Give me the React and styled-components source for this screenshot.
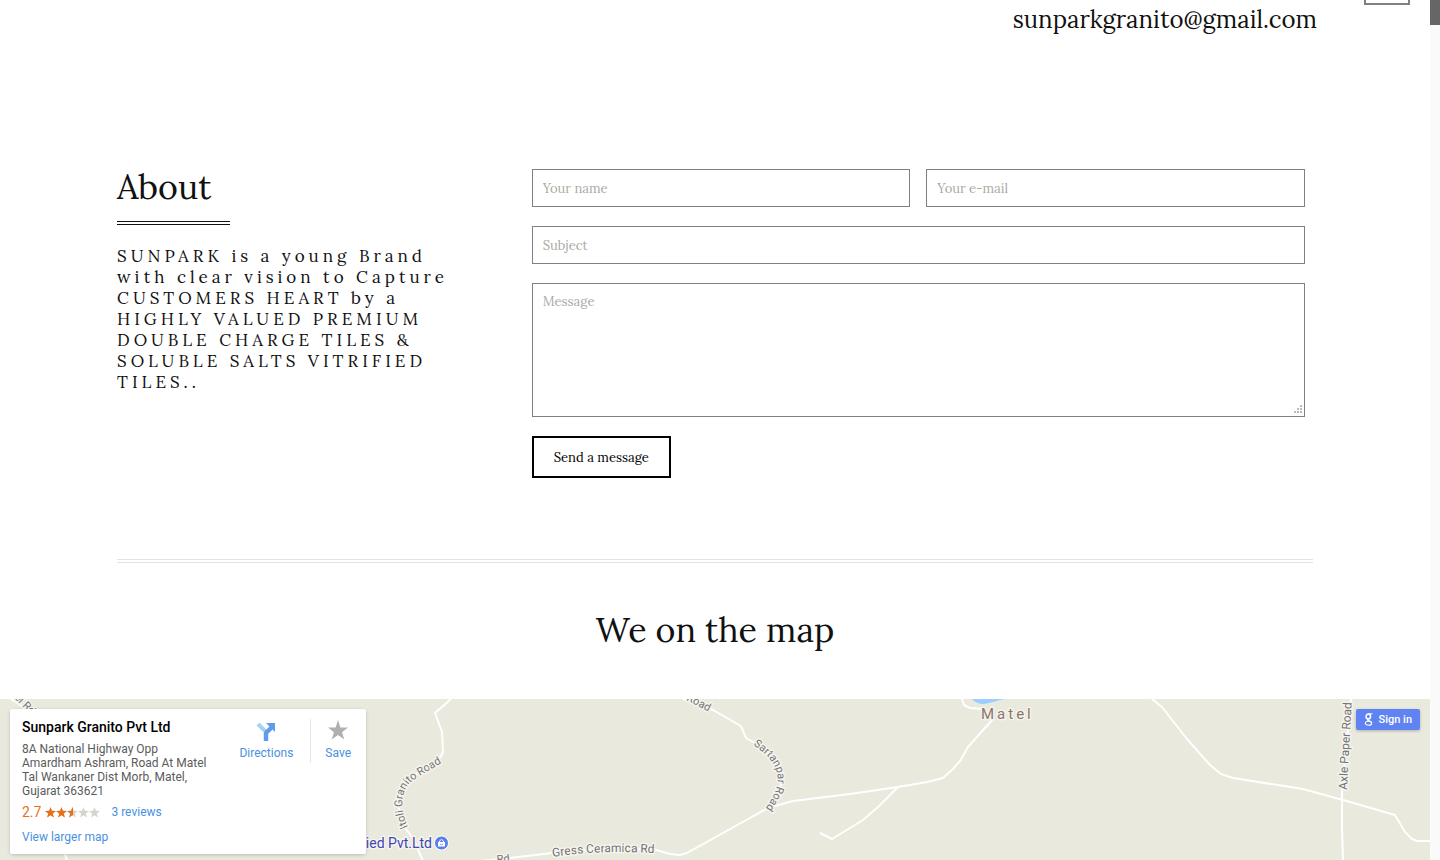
import React from "react";
import styled, { createGlobalStyle } from "styled-components";

const serif = `"Lora", "Liberation Serif", serif`;
const sans = `Roboto, "Liberation Sans", sans-serif`;

const GlobalStyle = createGlobalStyle`
  * { box-sizing: border-box; }
  body { margin: 0; background: #fff; color: #111; font-family: ${serif}; }
`;

const Frame = styled.div`
  display: flex;
  height: 100vh;
  overflow: hidden;
`;

const Page = styled.div`
  flex: 1;
  min-width: 0;
  display: flex;
  flex-direction: column;
  position: relative;
`;

const ScrollTrack = styled.div`
  width: 10px;
  background: #fafafa;
`;

const ScrollThumb = styled.div`
  height: 25px;
  background: #666;
`;

const MenuButton = styled.button`
  position: absolute;
  top: -41px;
  right: 20px;
  width: 46px;
  height: 46px;
  border: 2px solid #808080;
  background: #fff;
`;

const Header = styled.header`
  display: flex;
  justify-content: flex-end;
  padding: 4px 113px 0;
`;

const Email = styled.a`
  color: #111;
  font-size: 24px;
  line-height: 32px;
  text-decoration: none;
`;

const Contact = styled.main`
  display: grid;
  grid-template-columns: minmax(0, 1fr) minmax(0, 2fr);
  gap: 28px;
  margin: 133px 117px 0;
  padding: 0 8px 81px 0;
`;

const Heading = styled.h2`
  margin: 0;
  font-size: 34px;
  line-height: 36px;
  font-weight: 400;
`;

const AboutRule = styled.div`
  width: 113px;
  height: 4px;
  margin: 16px 0 21px;
  border: solid #111;
  border-width: 1px 0;
`;

const AboutText = styled.p`
  margin: 0;
  padding-right: 40px;
  font-size: 17px;
  line-height: 21px;
  letter-spacing: 4px;
`;

const Form = styled.form`
  display: grid;
  grid-template-columns: 1fr 1fr;
  gap: 19px 16px;
  align-content: start;
`;

const gripDots = [[11, 4], [8, 7], [11, 7], [5, 10], [8, 10], [11, 10]]
  .map(([x, y]) => `linear-gradient(#bbb, #bbb) ${x}px ${y}px / 2px 2px no-repeat`)
  .join(", ");

const Field = styled.input`
  grid-column: ${(p) => (p.$wide ? "1 / -1" : "auto")};
  width: 100%;
  min-width: 0;
  height: ${(p) => p.$height || 38}px;
  padding: ${(p) => (p.$height ? "9px 10px" : "0 10px")};
  border: 1px solid #808080;
  border-radius: 0;
  background: #fff;
  color: #111;
  font-family: ${serif};
  font-size: 13px;
  line-height: 18px;
  display: block;
  resize: vertical;
  &::placeholder { color: #aaa9a2; opacity: 1; }
  &::-webkit-resizer { background: ${gripDots}; }
`;

const Submit = styled.button`
  justify-self: start;
  height: 42px;
  padding: 0 20px;
  border: 2px solid #000;
  background: #fff;
  color: #000;
  font-family: ${serif};
  font-size: 13px;
`;

const MapIntro = styled.section`
  margin: 0 117px;
  padding: 49px 0 51px;
  border-top: 4px double #e3e3e3;
  text-align: center;
`;

const MapArea = styled.section`
  position: relative;
  flex: 1;
  min-height: 160px;
  overflow: hidden;
  background: #eae9de;
  font-family: ${sans};
`;

const MapDrawing = styled.svg`
  display: block;
  width: 100%;
  height: 100%;
  text { font-family: ${sans}; paint-order: stroke; stroke: #f5f4ee; stroke-width: 3px; stroke-linejoin: round; }
`;

const PlaceCard = styled.article`
  position: absolute;
  top: 10px;
  left: 10px;
  width: 356px;
  min-height: 145px;
  padding: 10px 14px 9px 12px;
  display: flex;
  justify-content: space-between;
  border-radius: 2px;
  background: #fff;
  box-shadow: 0 1px 4px -1px rgba(0, 0, 0, 0.3);
  font-size: 12px;
`;

const PlaceName = styled.h3`
  margin: 0 0 7px;
  color: #000;
  font-size: 14px;
  line-height: 16px;
  font-weight: 500;
`;

const Address = styled.address`
  width: 195px;
  color: #5b5b5b;
  font-style: normal;
  line-height: 14px;
`;

const Rating = styled.div`
  display: flex;
  align-items: center;
  height: 16px;
  margin: 6px 0 9px;
  color: #e7711b;
  font-size: 14px;
  svg { margin: 0 11px 0 4px; }
`;

const MapLink = styled.a`
  color: #4a90e2;
  font-size: 12px;
  line-height: 16px;
  text-decoration: none;
`;

const Actions = styled.div`
  display: flex;
  height: 44px;
`;

const Action = styled(MapLink)`
  display: flex;
  flex-direction: column;
  align-items: center;
  padding: 0 ${(p) => (p.$divided ? 17 : 1)}px 0 ${(p) => (p.$divided ? 0 : 14)}px;
  border-right: ${(p) => (p.$divided ? "1px solid #e8e8e8" : "0")};
  svg { margin-bottom: 2px; }
`;

const SignIn = styled.button`
  position: absolute;
  top: 10px;
  right: 10px;
  height: 21px;
  padding: 0 8px;
  display: flex;
  align-items: center;
  gap: 5px;
  border: 0;
  border-radius: 2px;
  background: #5f83f2;
  color: #fff;
  box-shadow: 0 1px 3px rgba(0, 0, 0, 0.25);
  font-family: ${sans};
  font-size: 11px;
  font-weight: 500;
`;

const roads = [
  "M451 0L435 14L442 33L443 52Q442 58 437 61L430 65L408 81Q397 95 398 106L405 129L413 139L419 153L423 162",
  "M65 155L67 162",
  "M0 -8L40 20",
  "M683 0L713 11L741 27L746 39L755 44L775 59Q783 72 782 83L775 99L769 104L768 109",
  "M480 162L510 159L552 154L600 150L653 150L670 155L680 156L687 154L768 109L793 102L850 95L898 88L927 83L943 79L953 70L960 62L968 48L993 20",
  "M898 88L878 108L863 121L832 140L820 134",
  "M962 0L964 6L970 9L983 10",
  "M1152 0L1162 8L1187 40L1210 66L1221 75L1233 79L1303 90L1343 101L1395 116L1405 133L1412 140L1417 142L1430 142L1600 142",
  "M1351 0L1342 91L1342 130L1343 162",
];

const STAR = "M5.5 0L6.9 3.8L11 4L7.8 6.5L8.9 10.5L5.5 8.2L2.1 10.5L3.2 6.5L0 4L4.1 3.8Z";

function Stars() {
  return (
    <svg width="55" height="11" viewBox="0 0 55 11" role="img" aria-label="2.7 out of 5">
      <defs>
        <clipPath id="scored"><rect width="28" height="11" /></clipPath>
      </defs>
      {[0, 1, 2, 3, 4].map((n) => <path key={n} d={STAR} fill="#d3d3cf" transform={`translate(${n * 11} 0)`} />)}
      <g clipPath="url(#scored)">
        {[0, 1, 2].map((n) => <path key={n} d={STAR} fill="#e7711b" transform={`translate(${n * 11} 0)`} />)}
      </g>
    </svg>
  );
}

function RoadMap() {
  return (
    <MapDrawing>
      <defs>
        <path id="itoli" d="M408 128C399 108 401 91 412 82Q424 74 440 65" />
        <path id="sartanpar" d="M753 46C780 63 784 82 769 104L763 113" />
        <path id="gress" d="M553 158Q600 150 670 155" />
      </defs>
      <path d="M972 0Q976 5 984 5L993 3L1004 0Z" fill="#9dccff" />
      <g fill="none" stroke="#fff" strokeWidth="2" strokeLinejoin="round">
        {roads.map((d) => <path key={d} d={d} />)}
      </g>
      <g fill="#737373" fontSize="11">
        <text transform="translate(14 -1) rotate(45)">el Rd</text>
        <text><textPath href="#itoli">Itoli Granito Road</textPath></text>
        <text transform="translate(686 1) rotate(27)">Road</text>
        <text><textPath href="#sartanpar">Sartanpar Road</textPath></text>
        <text fontSize="12"><textPath href="#gress">Gress Ceramica Rd</textPath></text>
        <text transform="translate(497 164) rotate(-5)">Rd</text>
        <text fontSize="12" transform="translate(1347 91) rotate(-87)">Axle Paper Road</text>
      </g>
      <text x="981" y="20" fontSize="15" fill="#8b766b" letterSpacing="3">Matel</text>
      <text x="432" y="149" fontSize="14" fill="#3f47b5" textAnchor="end">ied Pvt.Ltd</text>
      <circle cx="441.500" cy="144" r="7" fill="#5b7fe9" stroke="#fff" />
      <path d="M438 143H445V147.500H438Z" fill="#fff" />
      <path d="M439.500 143V142Q441.500 139 443.500 142V143" fill="none" stroke="#fff" />
      <path d="M440 145Q441.500 146.500 443 145" fill="none" stroke="#5b7fe9" strokeWidth=".8" />
    </MapDrawing>
  );
}

export default function App() {
  return (
    <>
      <GlobalStyle />
      <Frame>
        <Page>
          <Header>
            <Email href="mailto:sunparkgranito@gmail.com">sunparkgranito@gmail.com</Email>
            <MenuButton type="button" aria-label="Menu" />
          </Header>
          <Contact>
            <section>
              <Heading>About</Heading>
              <AboutRule />
              <AboutText>
                SUNPARK is a young Brand with clear vision to Capture CUSTOMERS HEART by a HIGHLY
                VALUED PREMIUM DOUBLE CHARGE TILES &amp; SOLUBLE SALTS VITRIFIED TILES..
              </AboutText>
            </section>
            <Form onSubmit={(e) => e.preventDefault()}>
              <Field type="text" placeholder="Your name" aria-label="Your name" />
              <Field type="email" placeholder="Your e-mail" aria-label="Your e-mail" />
              <Field $wide type="text" placeholder="Subject" aria-label="Subject" />
              <Field as="textarea" $wide $height={134} placeholder="Message" aria-label="Message" />
              <Submit type="submit">Send a message</Submit>
            </Form>
          </Contact>
          <MapIntro>
            <Heading>We on the map</Heading>
          </MapIntro>
          <MapArea>
            <RoadMap />
            <PlaceCard>
              <div>
                <PlaceName>Sunpark Granito Pvt Ltd</PlaceName>
                <Address>8A National Highway Opp Amardham Ashram, Road At Matel Tal Wankaner Dist Morb, Matel, Gujarat 363621</Address>
                <Rating>
                  2.7
                  <Stars />
                  <MapLink href="#reviews">3 reviews</MapLink>
                </Rating>
                <MapLink href="#map">View larger map</MapLink>
              </div>
              <Actions>
                <Action $divided href="#directions">
                  <svg width="22" height="24" viewBox="0 0 22 24" aria-hidden="true">
                    <path d="M3 5L10 12" stroke="#a6d3f2" strokeWidth="4" />
                    <path d="M11 22V15Q11 13 13 12L17 8" fill="none" stroke="#629ce8" strokeWidth="4.500" />
                    <path d="M11 4H20V13Z" fill="#629ce8" />
                  </svg>
                  Directions
                </Action>
                <Action href="#save">
                  <svg width="22" height="24" viewBox="0 0 22 24" aria-hidden="true">
                    <path d="M11 1L13.4 8.6H21L15 13.2L17.3 20.5L11 16L4.7 20.5L7 13.2L1 8.6H8.6Z" fill="#b0b0b0" />
                  </svg>
                  Save
                </Action>
              </Actions>
            </PlaceCard>
            <SignIn type="button">
              <svg width="10" height="13" viewBox="0 0 10 13" fill="none" stroke="#fff" aria-hidden="true">
                <ellipse cx="4.300" cy="3.600" rx="2.200" ry="2.500" strokeWidth="1.500" />
                <path d="M4.500 .8H8.500M6 1L7 2" strokeWidth="1" />
                <path d="M4.500 6C2.500 7 4 7.500 6 8.200Q7.500 9 7.500 10" strokeWidth="1.300" />
                <ellipse cx="4.500" cy="10.200" rx="3.200" ry="2" strokeWidth="1.100" />
              </svg>
              Sign in
            </SignIn>
          </MapArea>
        </Page>
        <ScrollTrack><ScrollThumb /></ScrollTrack>
      </Frame>
    </>
  );
}
